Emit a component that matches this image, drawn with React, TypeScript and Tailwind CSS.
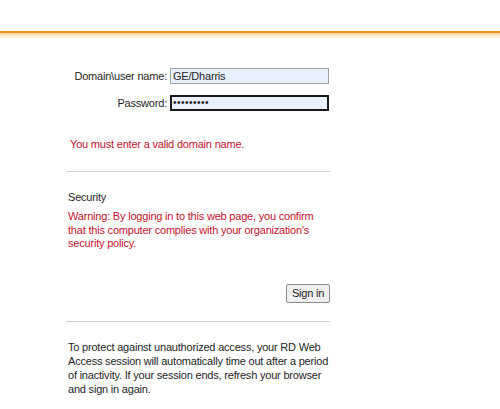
import React from "react";

const font = { fontFamily: '"Segoe UI", "Liberation Sans", Arial, sans-serif' };

const LoginPage: React.FC = () => {
    return (
        <div className="min-h-[409px] w-full bg-white text-[11px] tracking-[-0.2px] text-[#1e1e1e]" style={font}>
            {/* top strip with the orange rule */}
            <div className="h-[31px] bg-white" />
            <div className="h-[2px] bg-[#f7931e]" />
            <div className="h-[6px] bg-gradient-to-b from-[#fcd4a0] to-white" />

            <div className="ml-[66px] w-[264px]">
                <form className="mt-[29px] flex flex-col gap-[10px]" onSubmit={e => e.preventDefault()}>
                    <div className="flex items-center">
                        <label className="w-[104px] pr-[3px] text-right">Domain\user name:</label>
                        <input
                            className="h-[16px] w-[159px] border border-[#a0a0a0] bg-[#e8f0fe] px-[2px] text-[11px] leading-none outline-none"
                            style={font}
                            defaultValue="GE/Dharris"
                        />
                    </div>
                    <div className="flex items-center">
                        <label className="w-[104px] pr-[3px] text-right">Password:</label>
                        <input
                            type="password"
                            className="h-[16px] w-[159px] border-2 border-[#1a1a1a] bg-[#e8f0fe] px-[1px] text-[10px] tracking-[0.5px] leading-none outline-none"
                            style={font}
                            defaultValue="abcdefghi"
                        />
                    </div>
                </form>

                <p className="mt-[25px] pl-[4px] text-[#c4122f]">You must enter a valid domain name.</p>

                <div className="mt-[18px] h-px bg-[#d2d2d2]" />

                <p className="mt-[17px] pl-[2px]">Security</p>
                <p className="mt-[5px] pl-[2px] leading-[13.5px] text-[#c4122f]">
                    Warning: By logging in to this web page, you confirm
                    <br />
                    that this computer complies with your organization's
                    <br />
                    security policy.
                </p>

                <div className="mt-[33px] flex justify-end">
                    <button
                        type="button"
                        className="h-[19px] w-[44px] rounded-[2px] border border-[#8c8c8c] bg-[#efefef] text-[11px] leading-none text-[#1e1e1e]"
                        style={font}
                    >
                        Sign in
                    </button>
                </div>

                <div className="mt-[18px] h-px bg-[#d2d2d2]" />

                <p className="mt-[18px] pl-[2px] leading-[14.2px]">
                    To protect against unauthorized access, your RD Web
                    <br />
                    Access session will automatically time out after a period
                    <br />
                    of inactivity. If your session ends, refresh your browser
                    <br />
                    and sign in again.
                </p>
            </div>
        </div>
    );
};

export default function App() {
    return <LoginPage />;
}
